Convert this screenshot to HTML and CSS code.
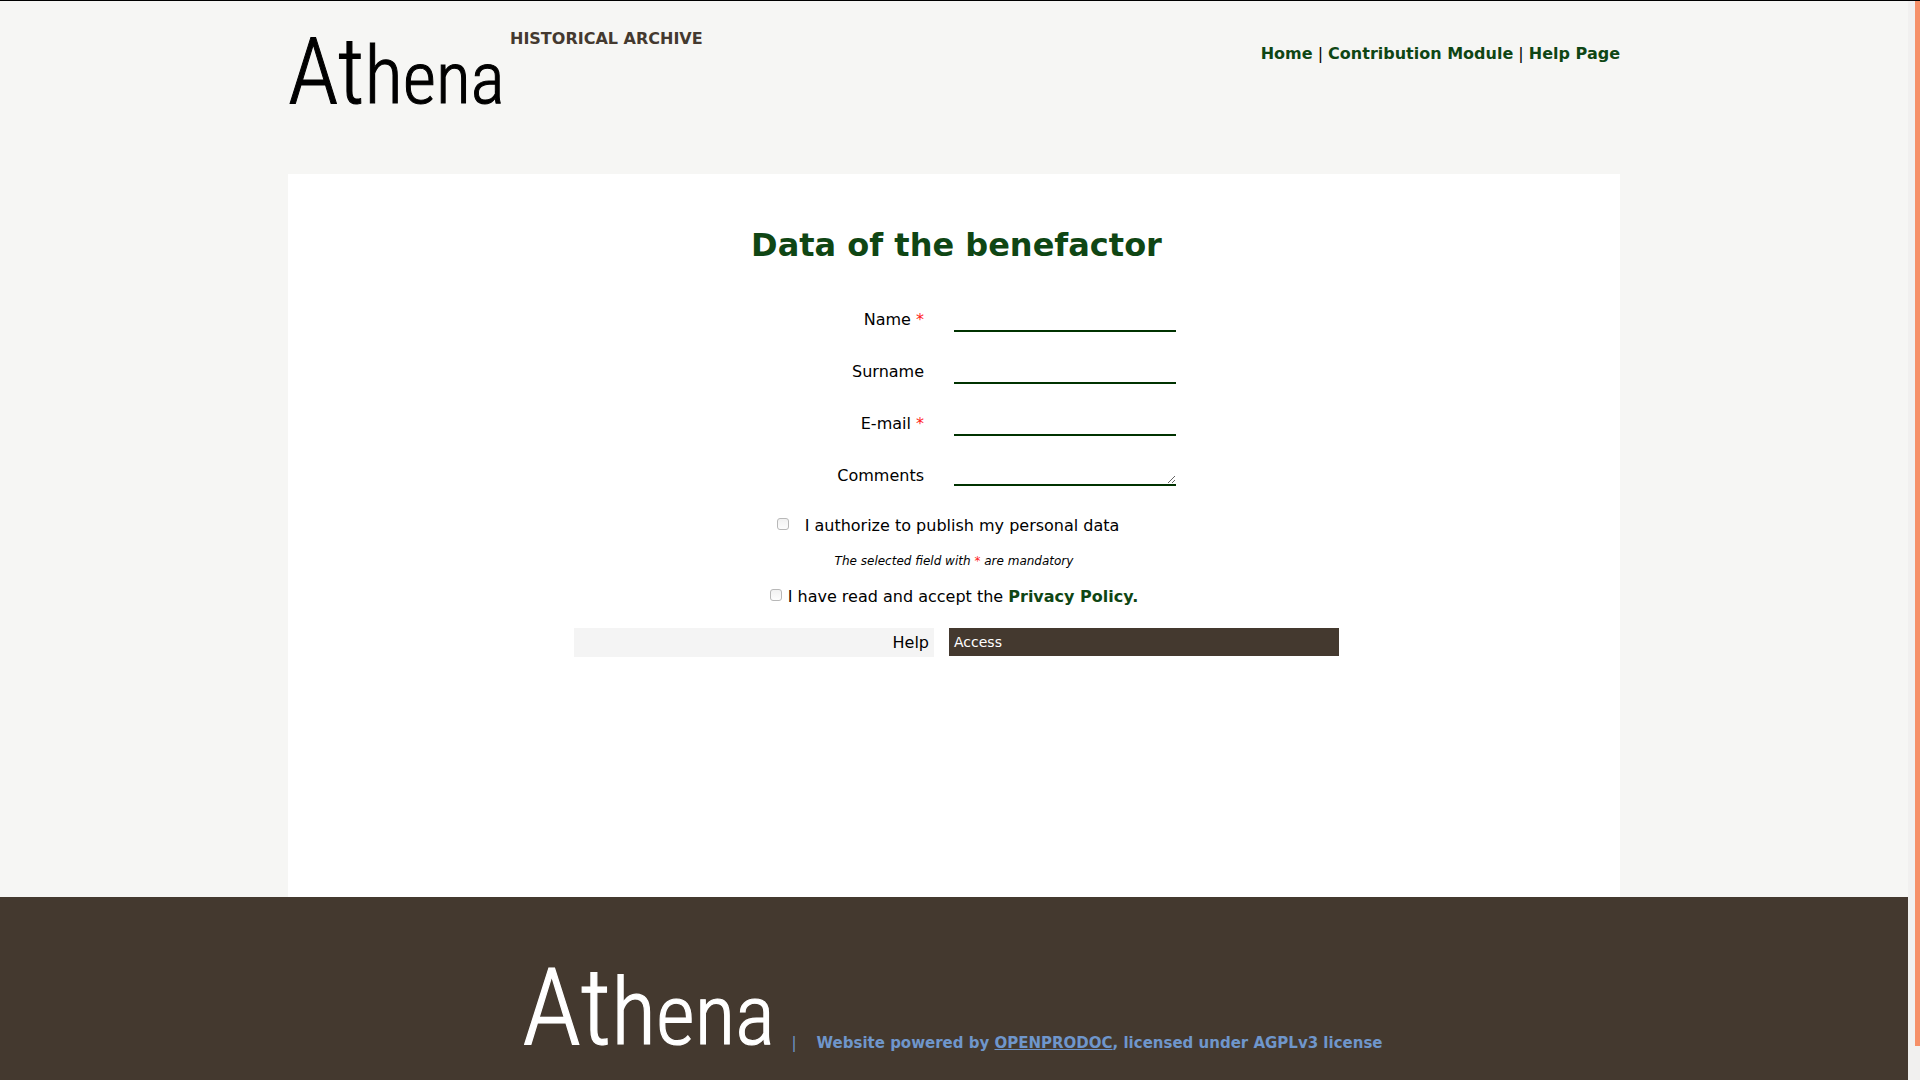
FILE: index.html
```html
<!DOCTYPE html>
<html lang="en">
<head>
<meta charset="utf-8">
<title>Athena - Historical Archive</title>
<link rel="stylesheet" href="styles.css">
</head>
<body>
<div class="page">
  <header class="header wrap">
    <svg class="logo" viewBox="0 0 214 84" role="img" aria-label="Athena"><text x="0" y="82"><tspan class="initial">At</tspan><tspan class="ascender">h</tspan>ena</text></svg>
    <p class="subtitle">HISTORICAL ARCHIVE</p>
    <nav class="nav"><a href="#">Home</a> | <a href="#">Contribution Module</a> | <a href="#">Help Page</a></nav>
  </header>
  <main class="card wrap">
    <h1 class="title">Data of the benefactor</h1>
    <form class="form">
      <div class="fields">
        <label for="name">Name <span class="req">*</span></label><input class="line" id="name" type="text">
        <label for="surname">Surname</label><input class="line" id="surname" type="text">
        <label for="email">E-mail <span class="req">*</span></label><input class="line" id="email" type="email">
        <label for="comments">Comments</label><textarea class="line area" id="comments" rows="1"></textarea>
      </div>
      <div class="check authorize"><input class="box" type="checkbox" id="authorize"><label for="authorize">I authorize to publish my personal data</label></div>
      <p class="note">The selected field with <span class="req">*</span> are mandatory</p>
      <div class="check policy"><input class="box" type="checkbox" id="policy"><label for="policy">I have read and accept the <a href="#">Privacy Policy.</a></label></div>
      <div class="actions"><a class="help" href="#">Help</a><button class="access" type="submit">Access</button></div>
    </form>
  </main>
  <footer class="footer">
    <svg class="footer-logo" viewBox="0 0 214 84" role="img" aria-label="Athena"><text x="0" y="81"><tspan class="initial">At</tspan><tspan class="ascender">h</tspan>ena</text></svg>
    <span class="bar">|</span>
    <p class="credit">Website powered by <a href="#">OPENPRODOC</a>, licensed under AGPLv3 license</p>
  </footer>
</div>
<div class="scrollbar"><div class="thumb"></div></div>
</body>
</html>
```
FILE: styles.css
```css
* { box-sizing: border-box; }
body {
  margin: 0;
  min-height: 100vh;
  display: flex;
  border-top: 1px solid #000;
  background: #f6f6f4;
  color: #000;
  font: 16px/19px "DejaVu Sans", sans-serif;
}
p, h1 { margin: 0; }
a { color: #0f4614; font-weight: bold; text-decoration: none; }
.page { flex: 1; display: flex; flex-direction: column; }
.wrap { width: 100%; max-width: 1332px; margin: 0 auto; }
.header { display: flex; align-items: flex-start; min-height: 173px; padding-top: 20px; }
.logo { width: 214px; height: 84px; fill: #000; stroke: #000; }
.logo, .footer-logo { overflow: visible; flex: none; stroke-width: 1px; }
.logo text, .footer-logo text { font: 300 72px "Roboto Condensed", "Lato", sans-serif; }
.logo .initial, .footer-logo .initial { font-size: 92px; }
.logo .ascender, .footer-logo .ascender { font-size: 80px; }
.subtitle { margin: 8px 0 0 8px; color: #44392f; font-weight: bold; }
.nav { margin: 23px 0 0 auto; }
.card { background: #fff; min-height: 723px; padding-top: 52px; }
.title { color: #0f4614; font-size: 32px; line-height: 38px; text-align: center; padding-left: 5px; }
.fields {
  display: grid;
  grid-template-columns: 1fr 1fr;
  grid-auto-rows: 24px;
  gap: 28px 30px;
  padding: 44px 0 0;
  margin-right: 30px;
}
.fields label { justify-self: end; padding-top: 2px; }
.req { color: #f22; }
.line {
  width: 222px;
  height: 24px;
  padding: 2px 0;
  border: 0;
  border-bottom: 2px solid #003200;
  outline: 0;
  background: transparent;
  font: inherit;
}
.area { height: 22px; padding: 0; resize: both; }
.check { display: flex; justify-content: center; }
.box {
  appearance: none;
  width: 12px;
  height: 12px;
  margin: 2px 0 0;
  border: 1px solid #b8b8b8;
  border-radius: 3px;
  background: linear-gradient(#f1f1f1, #fdfdfd);
}
.authorize { gap: 16px; margin-top: 28px; padding-right: 12px; }
.note { margin-top: 19px; font-size: 12px; line-height: 14px; font-style: italic; text-align: center; }
.policy { gap: 6px; margin-top: 19px; }
.actions { display: flex; justify-content: center; align-items: flex-start; gap: 15px; margin-top: 22px; padding-left: 5px; }
.help { width: 360px; padding: 5px; background: #f4f4f4; color: #000; font-weight: normal; text-align: right; }
.access {
  width: 390px;
  padding: 5px;
  border: 0;
  background: #44392f;
  color: #fff;
  font: 14px/18px "DejaVu Sans", sans-serif;
  text-align: left;
}
.footer {
  flex: 1;
  display: flex;
  justify-content: center;
  align-items: flex-start;
  padding: 52px 4px 0 0;
  background: #44392f;
  color: #6f96cb;
  font-size: 15px;
}
.footer-logo { width: 250px; height: 98px; fill: #fff; stroke: #fff; }
.bar { margin: 85px 20px 0; }
.credit { margin-top: 85px; font-weight: bold; }
.credit a { color: inherit; text-decoration: underline; }
.scrollbar { width: 12px; padding: 0 0 34px 7px; display: flex; background: #f1f0ef; }
.thumb { flex: 1; background: #f69068; }
```
